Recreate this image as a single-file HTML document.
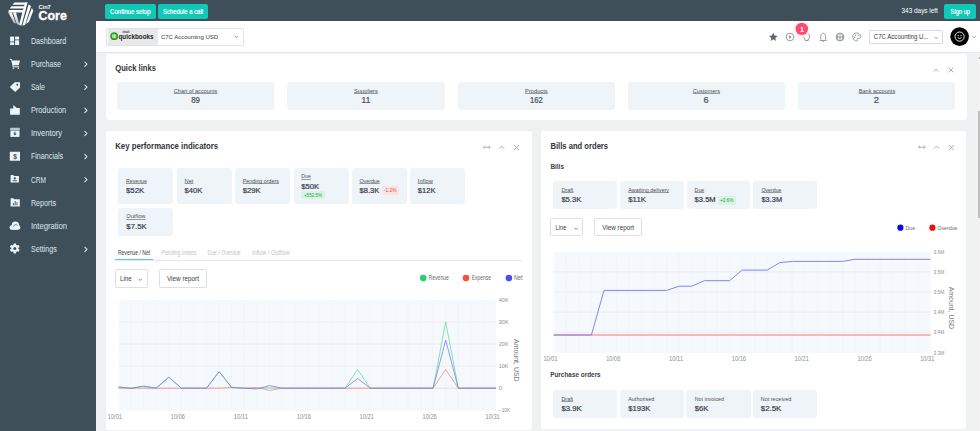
<!DOCTYPE html>
<html><head><meta charset="utf-8">
<style>
*{box-sizing:border-box;margin:0;padding:0}
html,body{width:980px;height:431px;overflow:hidden}
body{position:relative;background:#eef0f2;font-family:"Liberation Sans",sans-serif;color:#333}
.a{position:absolute;white-space:nowrap}
#top{left:0;top:0;width:980px;height:21px;background:#3e4f5a}
#side{left:0;top:0;width:96px;height:431px;background:#3e4f5a}
.btn{top:3.7px;height:14.9px;background:#10c8b7;color:#fff;font-size:6.5px;line-height:15px;text-align:center;border-radius:2px}
#hdr{left:96px;top:21px;width:884px;height:32px;background:#fff;border-bottom:1px solid #e6e9ec}
.nt{left:31px;font-size:8px;color:#dde5ea}
.ch{left:84px;width:5px;height:7px}
.card{background:#fff;border-radius:3px}
.ql{top:81.8px;width:157.3px;height:28px;background:#eff4f9;border-radius:3px;text-align:center}
.ql .l{position:absolute;left:0;right:0;top:5px;font-size:5.6px;color:#444;text-decoration:underline}
.ql .v{position:absolute;left:0;right:0;top:14px;font-size:8px;color:#444;font-weight:bold}
.kb{background:#eff4f9;border-radius:3px}
.kl{font-size:5.6px;color:#444;text-decoration:underline}
.kv{font-size:8px;color:#3a3f47;font-weight:bold}
.ttl{font-size:8.6px;font-weight:bold;color:#333}
.ico{stroke:#a0a6ad;fill:none;stroke-width:0.9}
.lbl{font-size:5.2px;color:#777}
</style></head>
<body>
<div id="top" class="a"></div>
<div id="side" class="a"></div>

<!-- logo -->
<svg class="a" style="left:0;top:0" width="40" height="30" viewBox="0 0 40 30">
  <defs><linearGradient id="lg" x1="0" y1="0" x2="0" y2="1"><stop offset="0" stop-color="#ffffff"/><stop offset="1" stop-color="#b3bfc6"/></linearGradient></defs>
  <g fill="#fbfdfe">
    <polygon points="14.4,2.5 27.3,2.5 26.7,4.8 12.6,4.8"/>
    <polygon points="11.3,6.2 26.3,6.2 25.7,8.5 9.8,8.5"/>
    <polygon points="8.8,10.1 25.2,10.1 24.5,12.6 8.3,12.6"/>
    <polygon points="25.0,2.5 27.5,2.5 21.5,25.4 19.0,25.0"/>
    <polygon points="28.6,4.6 31.0,5.9 25.0,25.0 22.4,25.5"/>
    <polygon points="31.8,7.9 33.4,10.6 29.0,21.8 25.8,24.1"/>
  </g>
  <g fill="url(#lg)">
    <polygon points="8.4,12.6 11.8,12.6 16.0,23.8 13.6,22.6"/>
    <polygon points="12.9,12.6 16.0,12.6 19.4,24.8 16.9,24.2"/>
  </g>
</svg>

<!-- sidebar nav -->

<svg class="a" style="left:0;top:0" width="96" height="260" viewBox="0 0 96 260">
  <g fill="none" stroke="#dfe7ec" stroke-width="1.05" stroke-linecap="round" stroke-linejoin="round">
    <polyline points="84.8,62 87,64.2 84.8,66.4"/>
    <polyline points="84.8,85 87,87.2 84.8,89.4"/>
    <polyline points="84.8,108.2 87,110.4 84.8,112.6"/>
    <polyline points="84.8,131.3 87,133.5 84.8,135.7"/>
    <polyline points="84.8,154.4 87,156.6 84.8,158.8"/>
    <polyline points="84.8,177.5 87,179.7 84.8,181.9"/>
    <polyline points="84.8,247.2 87,249.4 84.8,251.6"/>
  </g>
  <g fill="#eaf5fb">
    <!-- dashboard -->
    <rect x="10.1" y="36.6" width="4" height="4.9"/>
    <rect x="10.1" y="42.3" width="4" height="2.7"/>
    <rect x="15.1" y="36.6" width="4" height="2.9"/>
    <rect x="15.1" y="40.3" width="4" height="4.7"/>
    <!-- cart -->
    <path d="M9.8 58.7 L11.6 59.1 L12.2 60.6 L20 60.6 L18.7 65.2 L13.4 65.2 L13.6 66.2 L19.2 66.2 L19.2 67.2 L12.8 67.2 L11.2 60 L9.8 59.8 Z"/>
    <circle cx="13.4" cy="68.3" r="0.75"/><circle cx="18.3" cy="68.3" r="0.75"/>
    <!-- tag -->
    <path d="M14.8 82.3 L20 82.3 L20 87.4 L15.2 92.1 L9.8 86.9 Z"/>
    <!-- production -->
    <path d="M10.1 114.7 L10.1 108.4 L13.3 108.4 L13.3 105.1 L16.8 108 L19.8 108 L19.8 114.7 Z"/>
    <!-- inventory -->
    <rect x="10.1" y="127.8" width="9.7" height="2.4" rx="0.4" fill="#b9c6cf"/>
    <path d="M10.4 130.6 L19.5 130.6 L19.5 136.9 L10.4 136.9 Z"/>
    <!-- financials -->
    <rect x="9.8" y="151.8" width="10.2" height="9" rx="0.3"/>
    <!-- crm -->
    <path d="M10.6 175.1 L13.2 175.1 L14 176 L18.9 176 L18.9 182.5 L10.6 182.5 Z"/>
    <!-- reports -->
    <path d="M10.6 198.3 L13.4 198.3 L14.3 199.3 L19.8 199.3 L19.8 206.6 L10.6 206.6 Z"/>
    <!-- cloud -->
    <circle cx="11.9" cy="227.5" r="2.35"/><circle cx="15.4" cy="225.2" r="3.7"/><circle cx="17.9" cy="227.4" r="2.45"/><rect x="11.9" y="227" width="6" height="2.85"/>
    <!-- gear -->
    <circle cx="14.8" cy="248.4" r="3.6"/>
  </g>
  <g fill="#3e4f5a">
    <rect x="14.5" y="131.6" width="0.9" height="2.8"/>
    <path d="M13.2 133.6 L16.7 133.6 L14.95 135.6 Z"/>
    <circle cx="17.3" cy="84.7" r="0.95"/>
    <circle cx="14.8" cy="248.4" r="1.5"/>
    <circle cx="14.75" cy="178.4" r="1.15"/>
    <rect x="12.6" y="180.3" width="4.3" height="0.9"/>
    <rect x="12.9" y="203" width="0.9" height="2.4"/><rect x="14.7" y="201" width="0.9" height="4.4"/><rect x="16.5" y="202.2" width="0.9" height="3.2"/>
    <path d="M13.6 226.3 C14.2 224.4 16.6 224 17.6 225.6" fill="none" stroke="#3e4f5a" stroke-width="0.7"/>
  </g>
  <g fill="#eaf5fb"><rect x="13.50" y="251.40" width="2.6" height="2" rx="0.5" transform="rotate(180 14.80 252.40)"/><rect x="10.04" y="249.40" width="2.6" height="2" rx="0.5" transform="rotate(240 11.34 250.40)"/><rect x="10.04" y="245.40" width="2.6" height="2" rx="0.5" transform="rotate(300 11.34 246.40)"/><rect x="13.50" y="243.40" width="2.6" height="2" rx="0.5" transform="rotate(360 14.80 244.40)"/><rect x="16.96" y="245.40" width="2.6" height="2" rx="0.5" transform="rotate(420 18.26 246.40)"/><rect x="16.96" y="249.40" width="2.6" height="2" rx="0.5" transform="rotate(480 18.26 250.40)"/></g>
</svg>

<!-- top buttons -->

<!-- top buttons -->
<div class="a btn" style="left:105px;width:51px"></div>
<div class="a btn" style="left:158px;width:50px"></div>
<div class="a btn" style="left:944px;width:32px"></div>
<!-- header -->
<div id="hdr" class="a"></div>
<!-- qb dropdown -->
<div class="a" style="left:105.5px;top:28px;width:138px;height:18px;border:1px solid #dfe3ea;border-radius:2px;background:#fff"></div>
<div class="a" style="left:107.5px;top:29px;width:50px;height:16px;background:#e8e8e8"></div>
<svg class="a" style="left:110px;top:32px" width="9" height="9" viewBox="0 0 9 9"><circle cx="4.2" cy="4.2" r="3.9" fill="#2ca01c"/><path d="M2.6 2.6 v3.2 M2.6 2.6 h0.6 a1.6 1.6 0 0 1 0 3.2 M5.8 5.8 v-3.2 M5.8 5.8 h-0.6 a1.6 1.6 0 0 1 0 -3.2" stroke="#fff" stroke-width="0.7" fill="none"/></svg>
<svg class="a" style="left:234px;top:35px" width="5" height="4" viewBox="0 0 5 4"><polyline points="0.7,1 2.3,2.6 3.9,1" fill="none" stroke="#666" stroke-width="0.7"/></svg>

<!-- header icons -->
<svg class="a" style="left:760px;top:22px" width="110" height="30" viewBox="760 22 110 30">
  <path d="M773.3 32.8 L774.6 35.6 L777.6 35.9 L775.3 37.9 L776 40.9 L773.3 39.3 L770.6 40.9 L771.3 37.9 L769 35.9 L772 35.6 Z" fill="#5b6577"/>
  <circle cx="790" cy="37" r="3.8" fill="none" stroke="#7d8594" stroke-width="0.8"/>
  <path d="M789.2 35.2 L791.6 37 L789.2 38.8 Z" fill="#7d8594"/>
  <path d="M804.9 39.2 C803 37.6 803.2 33.6 806.7 33.5 C810.2 33.6 810.4 37.6 808.5 39.2 L808.3 40.4 L805.1 40.4 Z" fill="none" stroke="#7a8291" stroke-width="0.9"/>
  <path d="M820 40.5 L820.8 39.4 L820.8 36.6 C820.8 34.6 822 33.2 823.2 33.2 C824.4 33.2 825.6 34.6 825.6 36.6 L825.6 39.4 L826.4 40.5 Z M822.4 41.3 L824 41.3" fill="none" stroke="#7d8594" stroke-width="0.8" stroke-linejoin="round"/>
  <circle cx="840" cy="37" r="3.9" fill="none" stroke="#7d8594" stroke-width="0.8"/>
  <path d="M836.1 37 L843.9 37 M840 33.1 L840 40.9 M838.2 33.6 C837 35.5 837 38.5 838.2 40.4 M841.8 33.6 C843 35.5 843 38.5 841.8 40.4" fill="none" stroke="#7d8594" stroke-width="0.7"/>
  <path d="M856.7 33 C853.3 33 852.5 36 852.8 37.5 C853.2 39.8 855 41 856.8 41 C857.8 41 857.8 40.2 857.4 39.6 C857 39 857.4 38.2 858.2 38.2 L859.4 38.2 C860.6 38.2 861 37.3 860.8 36.3 C860.4 34.2 858.6 33 856.7 33 Z" fill="none" stroke="#7d8594" stroke-width="0.8"/>
  <circle cx="854.6" cy="37.4" r="0.6" fill="#7d8594"/><circle cx="855.6" cy="35.2" r="0.6" fill="#7d8594"/><circle cx="858.2" cy="35.2" r="0.6" fill="#7d8594"/>
  <circle cx="801.8" cy="28.9" r="8.8" fill="#ffeef1" opacity="0.7"/>
  <circle cx="801.8" cy="28.9" r="6.2" fill="#fc4a6e"/>
</svg>

<!-- company dropdown -->
<div class="a" style="left:869px;top:30px;width:74px;height:14px;border:1px solid #d6dbe6;border-radius:1px;background:#fff"></div>
<svg class="a" style="left:934px;top:35.5px" width="5" height="4" viewBox="0 0 5 4"><polyline points="0.7,1 2.2,2.5 3.7,1" fill="none" stroke="#8a93a5" stroke-width="0.9"/></svg>
<!-- avatar -->
<svg class="a" style="left:948px;top:25px" width="32" height="24" viewBox="948 25 32 24">
  <circle cx="959.6" cy="36.6" r="9.3" fill="#000"/>
  <circle cx="959.6" cy="36.6" r="4.6" fill="none" stroke="#fff" stroke-width="0.9"/>
  <circle cx="958.2" cy="35.6" r="0.6" fill="#fff"/><circle cx="961" cy="35.6" r="0.6" fill="#fff"/>
  <path d="M957.6 37.6 Q959.6 39.6 961.6 37.6" stroke="#fff" stroke-width="0.8" fill="none"/>
  <polyline points="972.6,36.2 974.2,37.8 975.8,36.2" fill="none" stroke="#8a93a5" stroke-width="0.9"/>
</svg>


<!-- Quick links card -->
<div class="a card" style="left:106px;top:53.8px;width:860.5px;height:66.4px"></div>
<svg class="a" style="left:930px;top:64px" width="26" height="12" viewBox="930 64 26 12">
  <polyline class="ico" points="933.6,71.5 936,69.2 938.4,71.5"/>
  <path class="ico" d="M948.6 67.6 L953.4 72.4 M953.4 67.6 L948.6 72.4"/>
</svg>
<div class="a ql" style="left:117px"></div>
<div class="a ql" style="left:287.3px"></div>
<div class="a ql" style="left:457.6px"></div>
<div class="a ql" style="left:627.8px"></div>
<div class="a ql" style="left:798.1px"></div>

<!-- KPI card -->
<div class="a card" style="left:106px;top:131px;width:426px;height:299px"></div>
<svg class="a" style="left:480px;top:141px" width="45" height="12" viewBox="480 141 45 12">
  <path class="ico" d="M483.4 147.2 L490.1 147.2 M484.8 145.8 L483.4 147.2 L484.8 148.6 M488.7 145.8 L490.1 147.2 L488.7 148.6"/>
  <polyline class="ico" points="499.2,148.6 501.6,146.2 504,148.6"/>
  <path class="ico" d="M514 145 L519 150 M519 145 L514 150"/>
</svg>

<div class="a kb" style="left:118px;top:168px;width:55px;height:36px"></div>
<div class="a kb" style="left:176.5px;top:168px;width:55px;height:36px"></div>
<div class="a kb" style="left:235px;top:168px;width:55px;height:36px"></div>
<div class="a kb" style="left:293.5px;top:168px;width:55px;height:36px"></div>
<div class="a" style="left:301.2px;top:191px;width:23.5px;height:8px;background:#d9f5e1;border-radius:1px;font-size:4.2px;line-height:8px;color:#1fa456;text-align:center"></div>
<div class="a kb" style="left:352px;top:168px;width:55px;height:36px"></div>
<div class="a" style="left:381.8px;top:186px;width:17px;height:8.7px;background:#fde3e3;border-radius:1px;font-size:4.2px;line-height:8.7px;color:#e5484d;text-align:center"></div>
<div class="a kb" style="left:410px;top:168px;width:55px;height:36px"></div>
<div class="a kb" style="left:118px;top:207.5px;width:55px;height:28px"></div>

<!-- tabs -->
<div class="a" style="left:115px;top:260px;width:407px;height:1px;background:#e6e9ec"></div>
<div class="a" style="left:115px;top:259px;width:37.8px;height:1px;background:#4fd3c8"></div>

<!-- controls -->
<div class="a" style="left:115px;top:269px;width:33px;height:18.5px;border:1px solid #dcdfe6;border-radius:2px"></div>
<svg class="a" style="left:138.4px;top:277.5px" width="5" height="4" viewBox="0 0 5 4"><polyline points="0.8,1 2.25,2.5 3.7,1" fill="none" stroke="#666" stroke-width="0.8"/></svg>
<div class="a" style="left:159px;top:269px;width:47.6px;height:18.5px;border:1px solid #dcdfe6;border-radius:2px"></div>

<!-- legend -->
<svg class="a" style="left:415px;top:272px" width="110" height="12" viewBox="415 272 110 12">
  <circle cx="423.2" cy="278.1" r="3.3" fill="#22d36b"/>
  <circle cx="466" cy="278.1" r="3.3" fill="#f4533d"/>
  <circle cx="508.9" cy="278.1" r="3.3" fill="#4d4df2"/>
</svg>

<!-- KPI chart -->
<svg class="a" style="left:0;top:0" width="540" height="431" viewBox="0 0 540 431">
  <rect x="118.8" y="299.8" width="377.3" height="111" fill="#f5f8fc"/>
  <g stroke="#f0f3f7" stroke-width="0.45" id="vg1"><line x1="131.0" y1="299.8" x2="131.0" y2="410.8"/><line x1="143.6" y1="299.8" x2="143.6" y2="410.8"/><line x1="156.2" y1="299.8" x2="156.2" y2="410.8"/><line x1="168.8" y1="299.8" x2="168.8" y2="410.8"/><line x1="181.4" y1="299.8" x2="181.4" y2="410.8"/><line x1="193.9" y1="299.8" x2="193.9" y2="410.8"/><line x1="206.5" y1="299.8" x2="206.5" y2="410.8"/><line x1="219.1" y1="299.8" x2="219.1" y2="410.8"/><line x1="231.7" y1="299.8" x2="231.7" y2="410.8"/><line x1="244.3" y1="299.8" x2="244.3" y2="410.8"/><line x1="256.9" y1="299.8" x2="256.9" y2="410.8"/><line x1="269.5" y1="299.8" x2="269.5" y2="410.8"/><line x1="282.1" y1="299.8" x2="282.1" y2="410.8"/><line x1="294.7" y1="299.8" x2="294.7" y2="410.8"/><line x1="307.2" y1="299.8" x2="307.2" y2="410.8"/><line x1="319.8" y1="299.8" x2="319.8" y2="410.8"/><line x1="332.4" y1="299.8" x2="332.4" y2="410.8"/><line x1="345.0" y1="299.8" x2="345.0" y2="410.8"/><line x1="357.6" y1="299.8" x2="357.6" y2="410.8"/><line x1="370.2" y1="299.8" x2="370.2" y2="410.8"/><line x1="382.8" y1="299.8" x2="382.8" y2="410.8"/><line x1="395.4" y1="299.8" x2="395.4" y2="410.8"/><line x1="408.0" y1="299.8" x2="408.0" y2="410.8"/><line x1="420.6" y1="299.8" x2="420.6" y2="410.8"/><line x1="433.1" y1="299.8" x2="433.1" y2="410.8"/><line x1="445.7" y1="299.8" x2="445.7" y2="410.8"/><line x1="458.3" y1="299.8" x2="458.3" y2="410.8"/><line x1="470.9" y1="299.8" x2="470.9" y2="410.8"/><line x1="483.5" y1="299.8" x2="483.5" y2="410.8"/></g>
  <g stroke="#e8ebf0" stroke-width="0.8">
    <line x1="118.4" y1="322.1" x2="496.1" y2="322.1"/>
    <line x1="118.4" y1="344.1" x2="496.1" y2="344.1"/>
    <line x1="118.4" y1="366.1" x2="496.1" y2="366.1"/>
  </g>
  <line x1="118.4" y1="388.2" x2="496.1" y2="388.2" stroke="#d8dce4" stroke-width="0.8"/>
  <g fill="none" stroke-width="0.8" stroke-linejoin="miter">
    <path stroke="#5ee38e" d="M118.4 387.1 L131.0 388.2 L143.6 386.4 L156.2 388.2 L168.8 377.2 L181.4 388.2 L193.9 388.2 L206.5 388.2 L219.1 371.7 L231.7 387.5 L244.3 388.2 L256.9 388.2 L269.5 387.8 L282.1 388.2 L294.7 388.2 L307.2 388.2 L319.8 388.2 L332.4 388.2 L345.0 388.2 L357.6 369.5 L370.2 388.2 L382.8 388.2 L395.4 388.2 L408.0 388.2 L420.6 388.2 L433.1 388.2 L445.7 322.0 L458.3 388.2 L470.9 388.2 L483.5 388.2 L496.1 388.2"/>
    <path stroke="#f58a7c" d="M118.4 388.2 L131.0 388.2 L143.6 388.2 L156.2 388.2 L168.8 388.2 L181.4 388.2 L193.9 388.2 L206.5 388.2 L219.1 388.2 L231.7 387.3 L244.3 388.2 L256.9 387.5 L269.5 390.4 L282.1 388.2 L294.7 388.2 L307.2 388.2 L319.8 388.2 L332.4 388.2 L345.0 388.2 L357.6 388.2 L370.2 388.2 L382.8 388.2 L395.4 388.2 L408.0 388.2 L420.6 388.2 L433.1 388.2 L445.7 369.5 L458.3 388.2 L470.9 388.2 L483.5 388.2 L496.1 388.2"/>
    <path stroke="#7b7cf0" d="M118.4 386.9 L131.0 388.4 L143.6 386.0 L156.2 388.2 L168.8 377.2 L181.4 388.2 L193.9 388.2 L206.5 388.2 L219.1 371.7 L231.7 387.5 L244.3 388.2 L256.9 388.9 L269.5 385.6 L282.1 388.2 L294.7 388.2 L307.2 388.2 L319.8 388.2 L332.4 388.2 L345.0 388.2 L357.6 378.5 L370.2 388.2 L382.8 388.2 L395.4 388.2 L408.0 388.2 L420.6 388.2 L433.1 388.2 L445.7 340.1 L458.3 388.2 L470.9 388.2 L483.5 388.2 L496.1 388.2"/>
  </g>
  </g>
  </g>
</svg>

<!-- Bills card -->
<div class="a card" style="left:541px;top:130.9px;width:425.4px;height:297.8px"></div>
<svg class="a" style="left:915px;top:141px" width="45" height="12" viewBox="915 141 45 12">
  <path class="ico" d="M918.4 147.2 L925.1 147.2 M919.8 145.8 L918.4 147.2 L919.8 148.6 M923.7 145.8 L925.1 147.2 L923.7 148.6"/>
  <polyline class="ico" points="934.4,148.6 936.8,146.2 939.2,148.6"/>
  <path class="ico" d="M948.8 145 L953.8 150 M953.8 145 L948.8 150"/>
</svg>

<div class="a kb" style="left:553.2px;top:181.3px;width:63.5px;height:28px"></div>
<div class="a kb" style="left:620px;top:181.3px;width:63.5px;height:28px"></div>
<div class="a kb" style="left:686.5px;top:181.3px;width:63.5px;height:28px"></div>
<div class="a" style="left:717.8px;top:195.5px;width:18.5px;height:9px;background:#d9f5e1;border-radius:1px;font-size:4.2px;line-height:9px;color:#1fa456;text-align:center"></div>
<div class="a kb" style="left:753.3px;top:181.3px;width:63.5px;height:28px"></div>

<div class="a" style="left:550.4px;top:218.2px;width:32.2px;height:18.2px;border:1px solid #dcdfe6;border-radius:2px"></div>
<svg class="a" style="left:573.6px;top:226.6px" width="5" height="4" viewBox="0 0 5 4"><polyline points="0.8,1 2.25,2.5 3.7,1" fill="none" stroke="#666" stroke-width="0.8"/></svg>
<div class="a" style="left:594px;top:218.2px;width:47.8px;height:18.2px;border:1px solid #dcdfe6;border-radius:2px"></div>

<svg class="a" style="left:895px;top:222px" width="45" height="12" viewBox="895 222 45 12">
  <circle cx="900.4" cy="227.7" r="3.1" fill="#0a0ae8"/>
  <circle cx="932.4" cy="227.7" r="3.1" fill="#ee1111"/>
</svg>

<!-- Bills chart -->
<svg class="a" style="left:540px;top:240px" width="430" height="130" viewBox="540 240 430 130">
  <rect x="553.9" y="252.1" width="376.6" height="101" fill="#f5f8fc"/>
  <g stroke="#f0f3f7" stroke-width="0.45" id="vg2"><line x1="566.3" y1="252.1" x2="566.3" y2="353.1"/><line x1="578.8" y1="252.1" x2="578.8" y2="353.1"/><line x1="591.4" y1="252.1" x2="591.4" y2="353.1"/><line x1="603.9" y1="252.1" x2="603.9" y2="353.1"/><line x1="616.5" y1="252.1" x2="616.5" y2="353.1"/><line x1="629.1" y1="252.1" x2="629.1" y2="353.1"/><line x1="641.6" y1="252.1" x2="641.6" y2="353.1"/><line x1="654.2" y1="252.1" x2="654.2" y2="353.1"/><line x1="666.7" y1="252.1" x2="666.7" y2="353.1"/><line x1="679.3" y1="252.1" x2="679.3" y2="353.1"/><line x1="691.9" y1="252.1" x2="691.9" y2="353.1"/><line x1="704.4" y1="252.1" x2="704.4" y2="353.1"/><line x1="717.0" y1="252.1" x2="717.0" y2="353.1"/><line x1="729.5" y1="252.1" x2="729.5" y2="353.1"/><line x1="742.1" y1="252.1" x2="742.1" y2="353.1"/><line x1="754.7" y1="252.1" x2="754.7" y2="353.1"/><line x1="767.2" y1="252.1" x2="767.2" y2="353.1"/><line x1="779.8" y1="252.1" x2="779.8" y2="353.1"/><line x1="792.3" y1="252.1" x2="792.3" y2="353.1"/><line x1="804.9" y1="252.1" x2="804.9" y2="353.1"/><line x1="817.5" y1="252.1" x2="817.5" y2="353.1"/><line x1="830.0" y1="252.1" x2="830.0" y2="353.1"/><line x1="842.6" y1="252.1" x2="842.6" y2="353.1"/><line x1="855.1" y1="252.1" x2="855.1" y2="353.1"/><line x1="867.7" y1="252.1" x2="867.7" y2="353.1"/><line x1="880.3" y1="252.1" x2="880.3" y2="353.1"/><line x1="892.8" y1="252.1" x2="892.8" y2="353.1"/><line x1="905.4" y1="252.1" x2="905.4" y2="353.1"/><line x1="917.9" y1="252.1" x2="917.9" y2="353.1"/></g>
  <g stroke="#e8ebf0" stroke-width="0.8">
    <line x1="553.7" y1="271.8" x2="930.5" y2="271.8"/>
    <line x1="553.7" y1="291.9" x2="930.5" y2="291.9"/>
    <line x1="553.7" y1="312.2" x2="930.5" y2="312.2"/>
    <line x1="553.7" y1="332.3" x2="930.5" y2="332.3"/>
  </g>
  <line x1="553.7" y1="335" x2="930.5" y2="335" stroke="#f7a3a3" stroke-width="1.3"/>
  <path fill="none" stroke="#7778f2" stroke-width="0.9" d="M553.7 335 L591.4 335 L604 290.4 L666.7 290.4 L679.3 286.2 L691.8 286.2 L704.4 280.7 L729.5 280.7 L742.1 270.1 L767.2 270.1 L779.8 262.6 L792.4 261.4 L842.6 261.4 L855.2 259.3 L930.5 259.3"/>
  </g>
  </g>
</svg>

<div class="a kb" style="left:553.2px;top:390px;width:63.7px;height:27.5px"></div>
<div class="a kb" style="left:620px;top:390px;width:63.6px;height:27.5px"></div>
<div class="a kb" style="left:686.4px;top:390px;width:64.3px;height:27.5px"></div>
<div class="a kb" style="left:753.1px;top:390px;width:64px;height:27.5px"></div>

<!-- scrollbar -->
<div class="a" style="left:967.8px;top:53px;width:12.2px;height:378px;background:#eff0f2"></div><div class="a" style="left:977px;top:53px;width:3px;height:378px;background:#f2f2f2"></div><div class="a" style="left:977.8px;top:111px;width:2.2px;height:107px;background:#bdbdbd"></div><div class="a" style="left:978.5px;top:56.5px;width:1.5px;height:2px;background:#a8a8a8"></div>

<svg class="a" style="left:0;top:0;z-index:5" width="980" height="431" viewBox="0 0 980 431" font-family="Liberation Sans, sans-serif">
<text x="110.10" y="13.70" font-size="7.05" font-weight="normal" fill="#ffffff" stroke="#ffffff" stroke-width="0.20" textLength="40.60" lengthAdjust="spacingAndGlyphs">Continue setup</text>
<text x="163.00" y="13.70" font-size="7.05" font-weight="normal" fill="#ffffff" stroke="#ffffff" stroke-width="0.20" textLength="40.00" lengthAdjust="spacingAndGlyphs">Schedule a call</text>
<text x="901.50" y="12.90" font-size="7.12" font-weight="normal" fill="#ffffff" textLength="36.40" lengthAdjust="spacingAndGlyphs">343 days left</text>
<text x="950.60" y="13.50" font-size="7.05" font-weight="normal" fill="#ffffff" stroke="#ffffff" stroke-width="0.20" textLength="19.40" lengthAdjust="spacingAndGlyphs">Sign up</text>
<text x="38.50" y="9.30" font-size="5.67" font-weight="bold" fill="#ffffff" textLength="12.20" lengthAdjust="spacingAndGlyphs">Cin7</text>
<text x="38.50" y="20.00" font-size="11.92" font-weight="bold" fill="#ffffff" stroke="#ffffff" stroke-width="0.35" textLength="28.30" lengthAdjust="spacingAndGlyphs">Core</text>
<text x="30.90" y="43.90" font-size="8.58" font-weight="normal" fill="#dfe7ec" textLength="35.30" lengthAdjust="spacingAndGlyphs">Dashboard</text>
<text x="30.90" y="67.00" font-size="8.58" font-weight="normal" fill="#dfe7ec" textLength="30.20" lengthAdjust="spacingAndGlyphs">Purchase</text>
<text x="30.90" y="90.10" font-size="8.58" font-weight="normal" fill="#dfe7ec" textLength="13.90" lengthAdjust="spacingAndGlyphs">Sale</text>
<text x="30.90" y="113.20" font-size="8.58" font-weight="normal" fill="#dfe7ec" textLength="35.20" lengthAdjust="spacingAndGlyphs">Production</text>
<text x="30.90" y="136.30" font-size="8.58" font-weight="normal" fill="#dfe7ec" textLength="31.20" lengthAdjust="spacingAndGlyphs">Inventory</text>
<text x="30.90" y="159.40" font-size="8.58" font-weight="normal" fill="#dfe7ec" textLength="32.30" lengthAdjust="spacingAndGlyphs">Financials</text>
<text x="30.90" y="182.50" font-size="8.58" font-weight="normal" fill="#dfe7ec" textLength="15.00" lengthAdjust="spacingAndGlyphs">CRM</text>
<text x="30.90" y="205.60" font-size="8.58" font-weight="normal" fill="#dfe7ec" textLength="25.20" lengthAdjust="spacingAndGlyphs">Reports</text>
<text x="30.90" y="228.70" font-size="8.58" font-weight="normal" fill="#dfe7ec" textLength="36.10" lengthAdjust="spacingAndGlyphs">Integration</text>
<text x="30.90" y="251.80" font-size="8.58" font-weight="normal" fill="#dfe7ec" textLength="25.90" lengthAdjust="spacingAndGlyphs">Settings</text>
<text x="118.40" y="38.50" font-size="6.86" font-weight="bold" fill="#262626" textLength="35.20" lengthAdjust="spacingAndGlyphs">quickbooks</text>
<text x="161.00" y="38.80" font-size="6.25" font-weight="normal" fill="#3a3a3a" textLength="57.00" lengthAdjust="spacingAndGlyphs">C7C Accounting USD</text>
<text x="873.80" y="39.40" font-size="6.54" font-weight="normal" fill="#3a3a3a" textLength="54.60" lengthAdjust="spacingAndGlyphs">C7C Accounting U...</text>
<text x="115.20" y="71.20" font-size="8.87" font-weight="bold" fill="#2f3337" textLength="40.80" lengthAdjust="spacingAndGlyphs">Quick links</text>
<rect x="173.80" y="93" width="43.40" height="0.8" fill="#80848b"/>
<text x="173.80" y="92.50" font-size="6.18" font-weight="normal" fill="#4d5057" textLength="43.40" lengthAdjust="spacingAndGlyphs">Chart of accounts</text>
<text x="191.20" y="102.80" font-size="8.43" font-weight="normal" fill="#4a505b" stroke="#4a505b" stroke-width="0.22" textLength="8.80" lengthAdjust="spacingAndGlyphs">89</text>
<rect x="354.00" y="93" width="23.90" height="0.8" fill="#80848b"/>
<text x="354.00" y="92.50" font-size="6.18" font-weight="normal" fill="#4d5057" textLength="23.90" lengthAdjust="spacingAndGlyphs">Suppliers</text>
<text x="361.60" y="102.80" font-size="8.43" font-weight="normal" fill="#4a505b" stroke="#4a505b" stroke-width="0.22" textLength="8.70" lengthAdjust="spacingAndGlyphs">11</text>
<rect x="525.10" y="93" width="22.60" height="0.8" fill="#80848b"/>
<text x="525.10" y="92.50" font-size="6.18" font-weight="normal" fill="#4d5057" textLength="22.60" lengthAdjust="spacingAndGlyphs">Products</text>
<text x="530.00" y="102.80" font-size="8.43" font-weight="normal" fill="#4a505b" stroke="#4a505b" stroke-width="0.22" textLength="12.80" lengthAdjust="spacingAndGlyphs">162</text>
<rect x="692.70" y="93" width="27.30" height="0.8" fill="#80848b"/>
<text x="692.70" y="92.50" font-size="6.18" font-weight="normal" fill="#4d5057" textLength="27.30" lengthAdjust="spacingAndGlyphs">Customers</text>
<text x="703.50" y="102.80" font-size="8.43" font-weight="normal" fill="#4a505b" stroke="#4a505b" stroke-width="0.22" textLength="5.00" lengthAdjust="spacingAndGlyphs">6</text>
<rect x="858.80" y="93" width="36.40" height="0.8" fill="#80848b"/>
<text x="858.80" y="92.50" font-size="6.18" font-weight="normal" fill="#4d5057" textLength="36.40" lengthAdjust="spacingAndGlyphs">Bank accounts</text>
<text x="873.80" y="102.80" font-size="8.43" font-weight="normal" fill="#4a505b" stroke="#4a505b" stroke-width="0.22" textLength="5.20" lengthAdjust="spacingAndGlyphs">2</text>
<text x="115.20" y="149.00" font-size="9.16" font-weight="bold" fill="#2f3337" textLength="103.00" lengthAdjust="spacingAndGlyphs">Key performance indicators</text>
<rect x="126.00" y="183" width="20.90" height="0.8" fill="#80848b"/>
<text x="126.00" y="182.90" font-size="6.18" font-weight="normal" fill="#4d5057" textLength="20.90" lengthAdjust="spacingAndGlyphs">Revenue</text>
<text x="126.00" y="193.10" font-size="7.56" font-weight="normal" fill="#3d434e" stroke="#3d434e" stroke-width="0.22" textLength="18.20" lengthAdjust="spacingAndGlyphs">$52K</text>
<rect x="184.60" y="183" width="8.70" height="0.8" fill="#80848b"/>
<text x="184.60" y="182.90" font-size="6.18" font-weight="normal" fill="#4d5057" textLength="8.70" lengthAdjust="spacingAndGlyphs">Net</text>
<text x="184.60" y="193.10" font-size="7.56" font-weight="normal" fill="#3d434e" stroke="#3d434e" stroke-width="0.22" textLength="17.70" lengthAdjust="spacingAndGlyphs">$40K</text>
<rect x="242.70" y="183" width="36.30" height="0.8" fill="#80848b"/>
<text x="242.70" y="182.90" font-size="6.18" font-weight="normal" fill="#4d5057" textLength="36.30" lengthAdjust="spacingAndGlyphs">Pending orders</text>
<text x="242.70" y="193.10" font-size="7.56" font-weight="normal" fill="#3d434e" stroke="#3d434e" stroke-width="0.22" textLength="18.00" lengthAdjust="spacingAndGlyphs">$29K</text>
<rect x="359.40" y="183" width="20.40" height="0.8" fill="#80848b"/>
<text x="359.40" y="182.90" font-size="6.18" font-weight="normal" fill="#4d5057" textLength="20.40" lengthAdjust="spacingAndGlyphs">Overdue</text>
<text x="359.40" y="193.10" font-size="7.56" font-weight="normal" fill="#3d434e" stroke="#3d434e" stroke-width="0.22" textLength="20.00" lengthAdjust="spacingAndGlyphs">$8.3K</text>
<rect x="417.80" y="183" width="15.10" height="0.8" fill="#80848b"/>
<text x="417.80" y="182.90" font-size="6.18" font-weight="normal" fill="#4d5057" textLength="15.10" lengthAdjust="spacingAndGlyphs">Inflow</text>
<text x="417.80" y="193.10" font-size="7.56" font-weight="normal" fill="#3d434e" stroke="#3d434e" stroke-width="0.22" textLength="17.70" lengthAdjust="spacingAndGlyphs">$12K</text>
<rect x="301.20" y="179" width="9.60" height="0.8" fill="#80848b"/>
<text x="301.20" y="178.30" font-size="6.18" font-weight="normal" fill="#4d5057" textLength="9.60" lengthAdjust="spacingAndGlyphs">Due</text>
<text x="301.20" y="189.10" font-size="7.56" font-weight="normal" fill="#3d434e" stroke="#3d434e" stroke-width="0.22" textLength="18.00" lengthAdjust="spacingAndGlyphs">$50K</text>
<text x="303.90" y="196.60" font-size="4.65" font-weight="normal" fill="#22a35a" textLength="18.30" lengthAdjust="spacingAndGlyphs">+552.5%</text>
<text x="383.90" y="191.90" font-size="4.65" font-weight="normal" fill="#e5484d" textLength="12.60" lengthAdjust="spacingAndGlyphs">-1.2%</text>
<rect x="126.30" y="219" width="19.10" height="0.8" fill="#80848b"/>
<text x="126.30" y="218.40" font-size="6.18" font-weight="normal" fill="#4d5057" textLength="19.10" lengthAdjust="spacingAndGlyphs">Outflow</text>
<text x="126.30" y="228.60" font-size="7.56" font-weight="normal" fill="#3d434e" stroke="#3d434e" stroke-width="0.22" textLength="20.40" lengthAdjust="spacingAndGlyphs">$7.5K</text>
<text x="117.90" y="254.90" font-size="6.54" font-weight="normal" fill="#3a3d42" textLength="32.30" lengthAdjust="spacingAndGlyphs">Revenue / Net</text>
<text x="161.60" y="254.90" font-size="6.54" font-weight="normal" fill="#bfc3c8" textLength="34.70" lengthAdjust="spacingAndGlyphs">Pending orders</text>
<text x="207.60" y="254.90" font-size="6.54" font-weight="normal" fill="#bfc3c8" textLength="33.10" lengthAdjust="spacingAndGlyphs">Due / Overdue</text>
<text x="251.90" y="254.90" font-size="6.54" font-weight="normal" fill="#bfc3c8" textLength="37.80" lengthAdjust="spacingAndGlyphs">Inflow / Outflow</text>
<text x="120.00" y="280.80" font-size="6.98" font-weight="normal" fill="#3a3d42" textLength="11.70" lengthAdjust="spacingAndGlyphs">Line</text>
<text x="167.00" y="280.80" font-size="6.98" font-weight="normal" fill="#3a3d42" textLength="32.00" lengthAdjust="spacingAndGlyphs">View report</text>
<text x="428.60" y="280.30" font-size="6.54" font-weight="normal" fill="#666a70" textLength="20.30" lengthAdjust="spacingAndGlyphs">Revenue</text>
<text x="471.80" y="280.30" font-size="6.54" font-weight="normal" fill="#666a70" textLength="19.20" lengthAdjust="spacingAndGlyphs">Expense</text>
<text x="514.00" y="280.30" font-size="6.54" font-weight="normal" fill="#666a70" textLength="8.40" lengthAdjust="spacingAndGlyphs">Net</text>
<text x="498.80" y="302.30" font-size="5.81" font-weight="normal" fill="#8a8e94" textLength="9.80" lengthAdjust="spacingAndGlyphs">40K</text>
<text x="498.80" y="324.30" font-size="5.81" font-weight="normal" fill="#8a8e94" textLength="9.80" lengthAdjust="spacingAndGlyphs">30K</text>
<text x="498.80" y="346.30" font-size="5.81" font-weight="normal" fill="#8a8e94" textLength="9.80" lengthAdjust="spacingAndGlyphs">20K</text>
<text x="498.80" y="368.30" font-size="5.81" font-weight="normal" fill="#8a8e94" textLength="9.60" lengthAdjust="spacingAndGlyphs">10K</text>
<text x="498.80" y="390.40" font-size="5.81" font-weight="normal" fill="#8a8e94" textLength="3.40" lengthAdjust="spacingAndGlyphs">0</text>
<text x="498.80" y="412.40" font-size="5.81" font-weight="normal" fill="#8a8e94" textLength="11.50" lengthAdjust="spacingAndGlyphs">−10K</text>
<text x="107.80" y="419.00" font-size="6.40" font-weight="normal" fill="#8a8e94" textLength="14.20" lengthAdjust="spacingAndGlyphs">10/01</text>
<text x="170.75" y="419.00" font-size="6.40" font-weight="normal" fill="#8a8e94" textLength="14.20" lengthAdjust="spacingAndGlyphs">10/06</text>
<text x="233.70" y="419.00" font-size="6.40" font-weight="normal" fill="#8a8e94" textLength="14.20" lengthAdjust="spacingAndGlyphs">10/11</text>
<text x="296.65" y="419.00" font-size="6.40" font-weight="normal" fill="#8a8e94" textLength="14.20" lengthAdjust="spacingAndGlyphs">10/16</text>
<text x="359.60" y="419.00" font-size="6.40" font-weight="normal" fill="#8a8e94" textLength="14.20" lengthAdjust="spacingAndGlyphs">10/21</text>
<text x="422.55" y="419.00" font-size="6.40" font-weight="normal" fill="#8a8e94" textLength="14.20" lengthAdjust="spacingAndGlyphs">10/26</text>
<text x="485.50" y="419.00" font-size="6.40" font-weight="normal" fill="#8a8e94" textLength="14.20" lengthAdjust="spacingAndGlyphs">10/31</text>
<text x="550.40" y="148.90" font-size="9.16" font-weight="bold" fill="#2f3337" textLength="57.70" lengthAdjust="spacingAndGlyphs">Bills and orders</text>
<text x="550.40" y="168.60" font-size="7.85" font-weight="bold" fill="#3d4045" textLength="13.60" lengthAdjust="spacingAndGlyphs">Bills</text>
<rect x="561.40" y="192" width="12.00" height="0.8" fill="#80848b"/>
<text x="561.40" y="192.00" font-size="6.18" font-weight="normal" fill="#4d5057" textLength="12.00" lengthAdjust="spacingAndGlyphs">Draft</text>
<text x="561.40" y="202.30" font-size="7.56" font-weight="normal" fill="#3d434e" stroke="#3d434e" stroke-width="0.22" textLength="19.90" lengthAdjust="spacingAndGlyphs">$5.3K</text>
<rect x="628.20" y="192" width="40.80" height="0.8" fill="#80848b"/>
<text x="628.20" y="192.00" font-size="6.18" font-weight="normal" fill="#4d5057" textLength="40.80" lengthAdjust="spacingAndGlyphs">Awaiting delivery</text>
<text x="628.20" y="202.30" font-size="7.56" font-weight="normal" fill="#3d434e" stroke="#3d434e" stroke-width="0.22" textLength="17.90" lengthAdjust="spacingAndGlyphs">$11K</text>
<rect x="694.60" y="192" width="9.70" height="0.8" fill="#80848b"/>
<text x="694.60" y="192.00" font-size="6.18" font-weight="normal" fill="#4d5057" textLength="9.70" lengthAdjust="spacingAndGlyphs">Due</text>
<text x="694.60" y="202.30" font-size="7.56" font-weight="normal" fill="#3d434e" stroke="#3d434e" stroke-width="0.22" textLength="21.10" lengthAdjust="spacingAndGlyphs">$3.5M</text>
<rect x="761.40" y="192" width="20.10" height="0.8" fill="#80848b"/>
<text x="761.40" y="192.00" font-size="6.18" font-weight="normal" fill="#4d5057" textLength="20.10" lengthAdjust="spacingAndGlyphs">Overdue</text>
<text x="761.40" y="202.30" font-size="7.56" font-weight="normal" fill="#3d434e" stroke="#3d434e" stroke-width="0.22" textLength="20.70" lengthAdjust="spacingAndGlyphs">$3.3M</text>
<text x="720.00" y="201.60" font-size="4.65" font-weight="normal" fill="#22a35a" textLength="13.30" lengthAdjust="spacingAndGlyphs">+0.6%</text>
<text x="555.50" y="229.90" font-size="6.98" font-weight="normal" fill="#3a3d42" textLength="11.00" lengthAdjust="spacingAndGlyphs">Line</text>
<text x="602.20" y="229.90" font-size="6.98" font-weight="normal" fill="#3a3d42" textLength="31.90" lengthAdjust="spacingAndGlyphs">View report</text>
<text x="905.40" y="230.00" font-size="6.25" font-weight="normal" fill="#666a70" textLength="9.80" lengthAdjust="spacingAndGlyphs">Due</text>
<text x="937.40" y="230.00" font-size="6.25" font-weight="normal" fill="#666a70" textLength="20.10" lengthAdjust="spacingAndGlyphs">Overdue</text>
<text x="933.50" y="254.00" font-size="5.67" font-weight="normal" fill="#8a8e94" textLength="10.80" lengthAdjust="spacingAndGlyphs">3.6M</text>
<text x="933.50" y="273.80" font-size="5.67" font-weight="normal" fill="#8a8e94" textLength="10.80" lengthAdjust="spacingAndGlyphs">3.5M</text>
<text x="933.50" y="294.00" font-size="5.67" font-weight="normal" fill="#8a8e94" textLength="10.80" lengthAdjust="spacingAndGlyphs">3.5M</text>
<text x="933.50" y="314.30" font-size="5.67" font-weight="normal" fill="#8a8e94" textLength="10.80" lengthAdjust="spacingAndGlyphs">3.4M</text>
<text x="933.50" y="334.20" font-size="5.67" font-weight="normal" fill="#8a8e94" textLength="10.80" lengthAdjust="spacingAndGlyphs">3.4M</text>
<text x="933.50" y="354.60" font-size="5.67" font-weight="normal" fill="#8a8e94" textLength="10.80" lengthAdjust="spacingAndGlyphs">3.3M</text>
<text x="543.40" y="360.80" font-size="6.40" font-weight="normal" fill="#8a8e94" textLength="14.20" lengthAdjust="spacingAndGlyphs">10/01</text>
<text x="606.20" y="360.80" font-size="6.40" font-weight="normal" fill="#8a8e94" textLength="14.20" lengthAdjust="spacingAndGlyphs">10/06</text>
<text x="669.00" y="360.80" font-size="6.40" font-weight="normal" fill="#8a8e94" textLength="14.20" lengthAdjust="spacingAndGlyphs">10/11</text>
<text x="731.80" y="360.80" font-size="6.40" font-weight="normal" fill="#8a8e94" textLength="14.20" lengthAdjust="spacingAndGlyphs">10/16</text>
<text x="794.60" y="360.80" font-size="6.40" font-weight="normal" fill="#8a8e94" textLength="14.20" lengthAdjust="spacingAndGlyphs">10/21</text>
<text x="857.40" y="360.80" font-size="6.40" font-weight="normal" fill="#8a8e94" textLength="14.20" lengthAdjust="spacingAndGlyphs">10/26</text>
<text x="920.20" y="360.80" font-size="6.40" font-weight="normal" fill="#8a8e94" textLength="14.20" lengthAdjust="spacingAndGlyphs">10/31</text>
<text x="550.20" y="376.90" font-size="7.85" font-weight="bold" fill="#3d4045" textLength="50.50" lengthAdjust="spacingAndGlyphs">Purchase orders</text>
<rect x="561.50" y="401" width="11.60" height="0.8" fill="#80848b"/>
<text x="561.50" y="400.90" font-size="6.18" font-weight="normal" fill="#4d5057" textLength="11.60" lengthAdjust="spacingAndGlyphs">Draft</text>
<text x="561.50" y="411.20" font-size="7.56" font-weight="normal" fill="#3d434e" stroke="#3d434e" stroke-width="0.22" textLength="20.20" lengthAdjust="spacingAndGlyphs">$3.9K</text>
<text x="628.20" y="400.90" font-size="6.18" font-weight="normal" fill="#4d5057" textLength="26.10" lengthAdjust="spacingAndGlyphs">Authorised</text>
<text x="628.20" y="411.20" font-size="7.56" font-weight="normal" fill="#3d434e" stroke="#3d434e" stroke-width="0.22" textLength="22.10" lengthAdjust="spacingAndGlyphs">$193K</text>
<text x="694.70" y="400.90" font-size="6.18" font-weight="normal" fill="#4d5057" textLength="29.30" lengthAdjust="spacingAndGlyphs">Not invoiced</text>
<text x="694.70" y="411.20" font-size="7.56" font-weight="normal" fill="#3d434e" stroke="#3d434e" stroke-width="0.22" textLength="13.70" lengthAdjust="spacingAndGlyphs">$6K</text>
<text x="760.80" y="400.90" font-size="6.18" font-weight="normal" fill="#4d5057" textLength="30.60" lengthAdjust="spacingAndGlyphs">Not received</text>
<text x="760.80" y="411.20" font-size="7.56" font-weight="normal" fill="#3d434e" stroke="#3d434e" stroke-width="0.22" textLength="20.50" lengthAdjust="spacingAndGlyphs">$2.5K</text>
<text x="799.90" y="32.00" font-size="7.27" font-weight="bold" fill="#ffffff" textLength="4.00" lengthAdjust="spacingAndGlyphs">1</text>
<text x="13.20" y="159.00" font-size="7.56" font-weight="bold" fill="#3e4f5a" textLength="3.60" lengthAdjust="spacingAndGlyphs">$</text>
<text x="122.50" y="33.00" font-size="2.62" font-weight="bold" fill="#333333" textLength="7.00" lengthAdjust="spacingAndGlyphs">intuit</text>
<text x="0" y="0" font-size="6.3" fill="#74787e" textLength="42.6" lengthAdjust="spacingAndGlyphs" transform="translate(513.8 339) rotate(90)">Amount, USD</text>
<text x="0" y="0" font-size="6.3" fill="#74787e" textLength="42.3" lengthAdjust="spacingAndGlyphs" transform="translate(949.4 286.7) rotate(90)">Amount, USD</text>
</svg>
</body></html>
